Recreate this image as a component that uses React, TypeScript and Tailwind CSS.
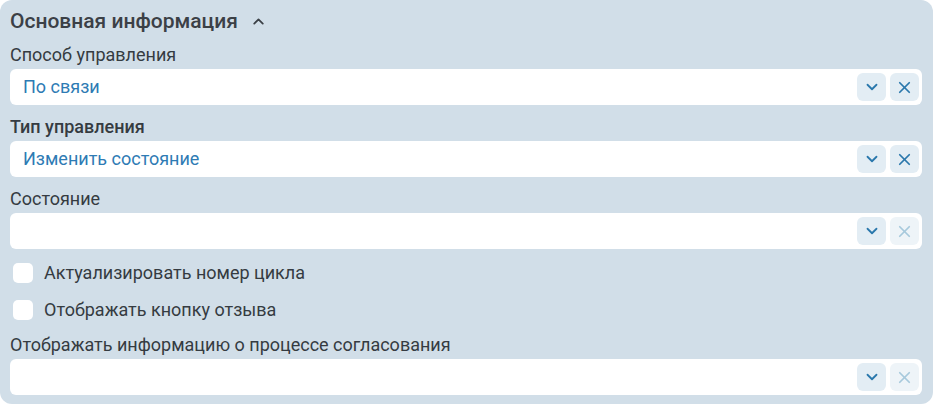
import { ChevronDown, ChevronUp, X } from "lucide-react";

type SelectProps = {
  value?: string;
};

function SelectField({ value }: SelectProps) {
  const filled = Boolean(value);
  return (
    <div className="flex h-9 items-center rounded-md bg-white pl-[13px] pr-[3px]">
      <span className="flex-1 truncate text-[18px] leading-5 text-[#2e7bb4]">{value}</span>
      <div className="flex gap-1">
        <button className="flex h-7 w-[29px] items-center justify-center rounded-md bg-[#e3edf4]">
          <ChevronDown size={18} strokeWidth={2.4} className="text-[#2a78ac]" />
        </button>
        <button
          className={
            filled
              ? "flex h-7 w-[29px] items-center justify-center rounded-md bg-[#e3edf4]"
              : "flex h-7 w-[29px] items-center justify-center rounded-md bg-[#eef4f8]"
          }
        >
          <X size={19} strokeWidth={2.2} className={filled ? "text-[#2a78ac]" : "text-[#a7c9dc]"} />
        </button>
      </div>
    </div>
  );
}

function Field({ label, value, bold, top }: { label: string; value?: string; bold?: boolean; top: string }) {
  return (
    <div className={"flex flex-col gap-1 " + top}>
      <label
        className={
          bold
            ? "text-[18px] font-medium leading-5 text-[#353b41]"
            : "text-[18px] leading-5 text-[#353b41]"
        }
      >
        {label}
      </label>
      <SelectField value={value} />
    </div>
  );
}

function Check({ label }: { label: string }) {
  return (
    <label className="flex h-5 items-center gap-[11px] pl-[3px]">
      <span className="h-5 w-5 rounded-[5px] bg-white" />
      <span className="text-[18px] leading-5 text-[#353b41]">{label}</span>
    </label>
  );
}

export default function App() {
  return (
    <div className="h-[406px] w-[935px] bg-white font-['Roboto',sans-serif]">
      <section className="h-[404px] w-[933px] rounded-xl bg-[#d1dee8] pl-[10px] pr-[11px] pt-[9px]">
        <div className="flex h-6 items-center gap-3">
          <h3 className="text-[21px] font-medium leading-6 text-[#3b4046]">Основная информация</h3>
          <ChevronUp size={17} strokeWidth={2.5} className="text-[#3b4046]" />
        </div>
        <div className="flex flex-col">
          <Field top="mt-3" label="Способ управления" value="По связи" />
          <Field top="mt-3" label="Тип управления" value="Изменить состояние" bold />
          <Field top="mt-3" label="Состояние" />
          <div className="mt-[14px] flex flex-col gap-[17px]">
            <Check label="Актуализировать номер цикла" />
            <Check label="Отображать кнопку отзыва" />
          </div>
          <Field top="mt-[15px]" label="Отображать информацию о процессе согласования" />
        </div>
      </section>
    </div>
  );
}
